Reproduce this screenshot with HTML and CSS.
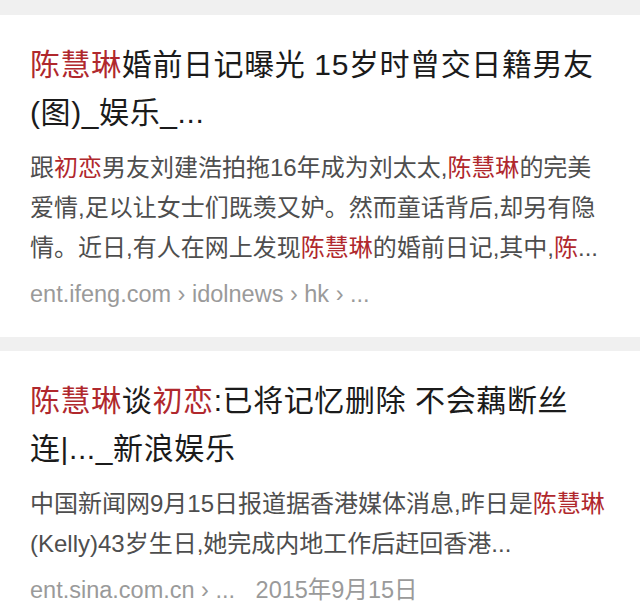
FILE: index.html
```html
<!DOCTYPE html>
<html lang="zh-CN">
<head>
    <meta charset="UTF-8">
    <meta name="viewport" content="width=device-width, initial-scale=1.0">
    <title>陈慧琳 - 搜索结果</title>
    <link rel="stylesheet" href="styles.css">
</head>
<body>
    <div class="results">
        <div class="result">
            <h3 class="title"><em>陈慧琳</em>婚前日记曝光 15岁时曾交日籍男友<br>(图)_娱乐_...</h3>
            <p class="snippet">跟<em>初恋</em>男友刘建浩拍拖16年成为刘太太,<em>陈慧琳</em>的完美<br>爱情,足以让女士们既羡又妒。然而童话背后,却另有隐<br>情。近日,有人在网上发现<em>陈慧琳</em>的婚前日记,其中,<em>陈</em>...</p>
            <div class="url">ent.ifeng.com › idolnews › hk › ...</div>
        </div>
        <div class="result">
            <h3 class="title"><em>陈慧琳</em>谈<em>初恋</em>:已将记忆删除 不会藕断丝<br>连|..._新浪娱乐</h3>
            <p class="snippet">中国新闻网9月15日报道据香港媒体消息,昨日是<em>陈慧琳</em><br>(Kelly)43岁生日,她完成内地工作后赶回香港...</p>
            <div class="url">ent.sina.com.cn › ... <span class="date">2015年9月15日</span></div>
        </div>
    </div>
</body>
</html>
```

FILE: styles.css
```css
body {
    margin: 0;
    background: #f0f0f0;
    font-family: "Liberation Sans", "Noto Sans CJK SC", sans-serif;
}
.results {
    display: flex;
    flex-direction: column;
    gap: 14px;
    padding-top: 15px;
}
.result {
    background: #fff;
    padding: 26px 30px 23px 30px;
}
em {
    font-style: normal;
    color: #b0282d;
}
.title {
    margin: 0;
    font-size: 30px;
    font-weight: normal;
    line-height: 48px;
    letter-spacing: 0.6px;
    color: #1b1b1b;
    white-space: nowrap;
}
.snippet {
    margin: 11px 0 0;
    font-size: 24px;
    line-height: 40px;
    color: #4e4e4e;
    white-space: nowrap;
}
.url {
    margin-top: 6px;
    font-size: 23.5px;
    line-height: 40px;
    color: #9a9a9a;
}
.date {
    margin-left: 14px;
}
```
